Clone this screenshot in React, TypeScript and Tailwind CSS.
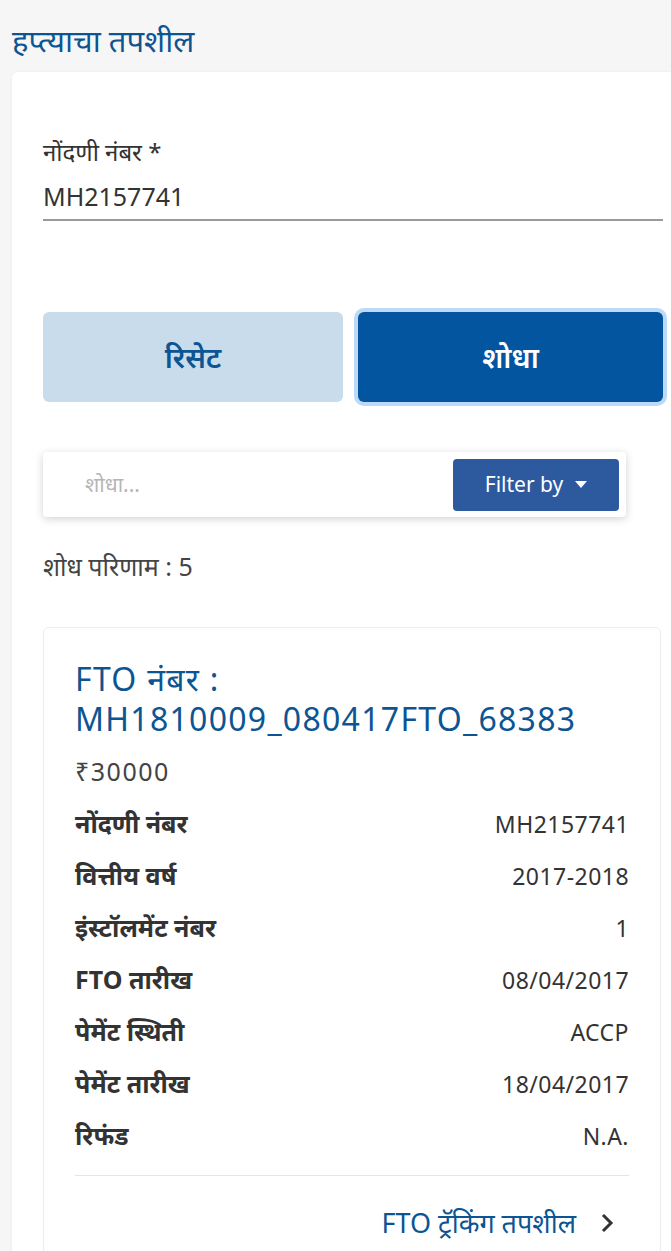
import React from 'react';

const FONT = { fontFamily: '"Noto Sans", "Noto Sans Devanagari", Roboto, sans-serif' };

const rows: [string, string][] = [
  ['नोंदणी नंबर', 'MH2157741'],
  ['वित्तीय वर्ष', '2017-2018'],
  ['इंस्टॉलमेंट नंबर', '1'],
  ['FTO तारीख', '08/04/2017'],
  ['पेमेंट स्थिती', 'ACCP'],
  ['पेमेंट तारीख', '18/04/2017'],
  ['रिफंड', 'N.A.'],
];

export default function App() {
  return (
    <div className="min-h-[1251px] w-[671px] overflow-hidden bg-[#f6f6f6]" style={FONT}>
      <h1 className="px-3 pt-[20px] text-[31px] leading-[40px] text-[#0c5592]">हप्त्याचा तपशील</h1>

      <div className="mt-[12px] ml-3 rounded-tl-md bg-white pl-[31px] pr-[8px] pt-[63px] pb-10 shadow-[0_0_3px_rgba(0,0,0,0.06)]">
        {/* registration number field */}
        <div className="border-b-2 border-[#9a9a9a] pb-[6px]">
          <div className="text-[24px] leading-[34px] text-[#333]">नोंदणी नंबर *</div>
          <div className="mt-[10px] text-[25px] leading-[34px] text-[#333]">MH2157741</div>
        </div>

        {/* buttons */}
        <div className="mt-[91px] flex gap-[15px]">
          <button className="h-[90px] w-[300px] rounded-md bg-[#c9dcec] text-[29px] font-semibold text-[#0c5592]">रिसेट</button>
          <button className="h-[90px] w-[305px] rounded-md bg-[#02559e] text-[29px] font-semibold text-white ring-4 ring-[#bcd9f5]">शोधा</button>
        </div>

        {/* search bar */}
        <div className="mt-[50px] flex h-[65px] w-[583px] items-center justify-between rounded-sm bg-white pl-[42px] pr-[7px] shadow-[0_2px_8px_rgba(0,0,0,0.18)]">
          <span className="text-[21px] text-[#b5b5b5]">शोधा...</span>
          <button className="flex h-[52px] w-[166px] items-center justify-center gap-3 rounded bg-[#2d5a9e] text-[21px] text-white">
            Filter by
            <svg width="12" height="7" viewBox="0 0 12 7"><path d="M0 0h12L6 7z" fill="white" /></svg>
          </button>
        </div>

        <div className="mt-[32px] text-[25px] leading-[34px] text-[#444]">शोध परिणाम : 5</div>

        {/* result card */}
        <div className="mt-[44px] mr-[2px] rounded-md border border-[#ececec] bg-white px-[31px] pt-[31px] pb-[6px]">
          <div className="text-[32px] leading-[40px] tracking-[0.04em] text-[#0c5592]">
            FTO नंबर :<br />MH1810009_080417FTO_68383
          </div>
          <div className="mt-[15px] text-[25px] leading-[34px] tracking-[0.06em] text-[#444]">₹30000</div>
          <div className="mt-[10px]">
            {rows.map(([label, value]) => (
              <div key={label} className="flex h-[52px] items-center justify-between">
                <span className="text-[25px] font-bold text-[#333]">{label}</span>
                <span className="text-[23px] tracking-[0.02em] text-[#333]">{value}</span>
              </div>
            ))}
          </div>
          <div className="mt-[13px] border-t border-[#e5e5e5]" />
          <div className="flex h-[94px] items-center justify-end gap-[24px] pr-[15px]">
            <span className="text-[27px] text-[#0c5592]">FTO ट्रॅकिंग तपशील</span>
            <svg width="14" height="22" viewBox="0 0 14 22"><path d="M3 3l8 8-8 8" fill="none" stroke="#333" strokeWidth="3" /></svg>
          </div>
        </div>
      </div>
    </div>
  );
}
